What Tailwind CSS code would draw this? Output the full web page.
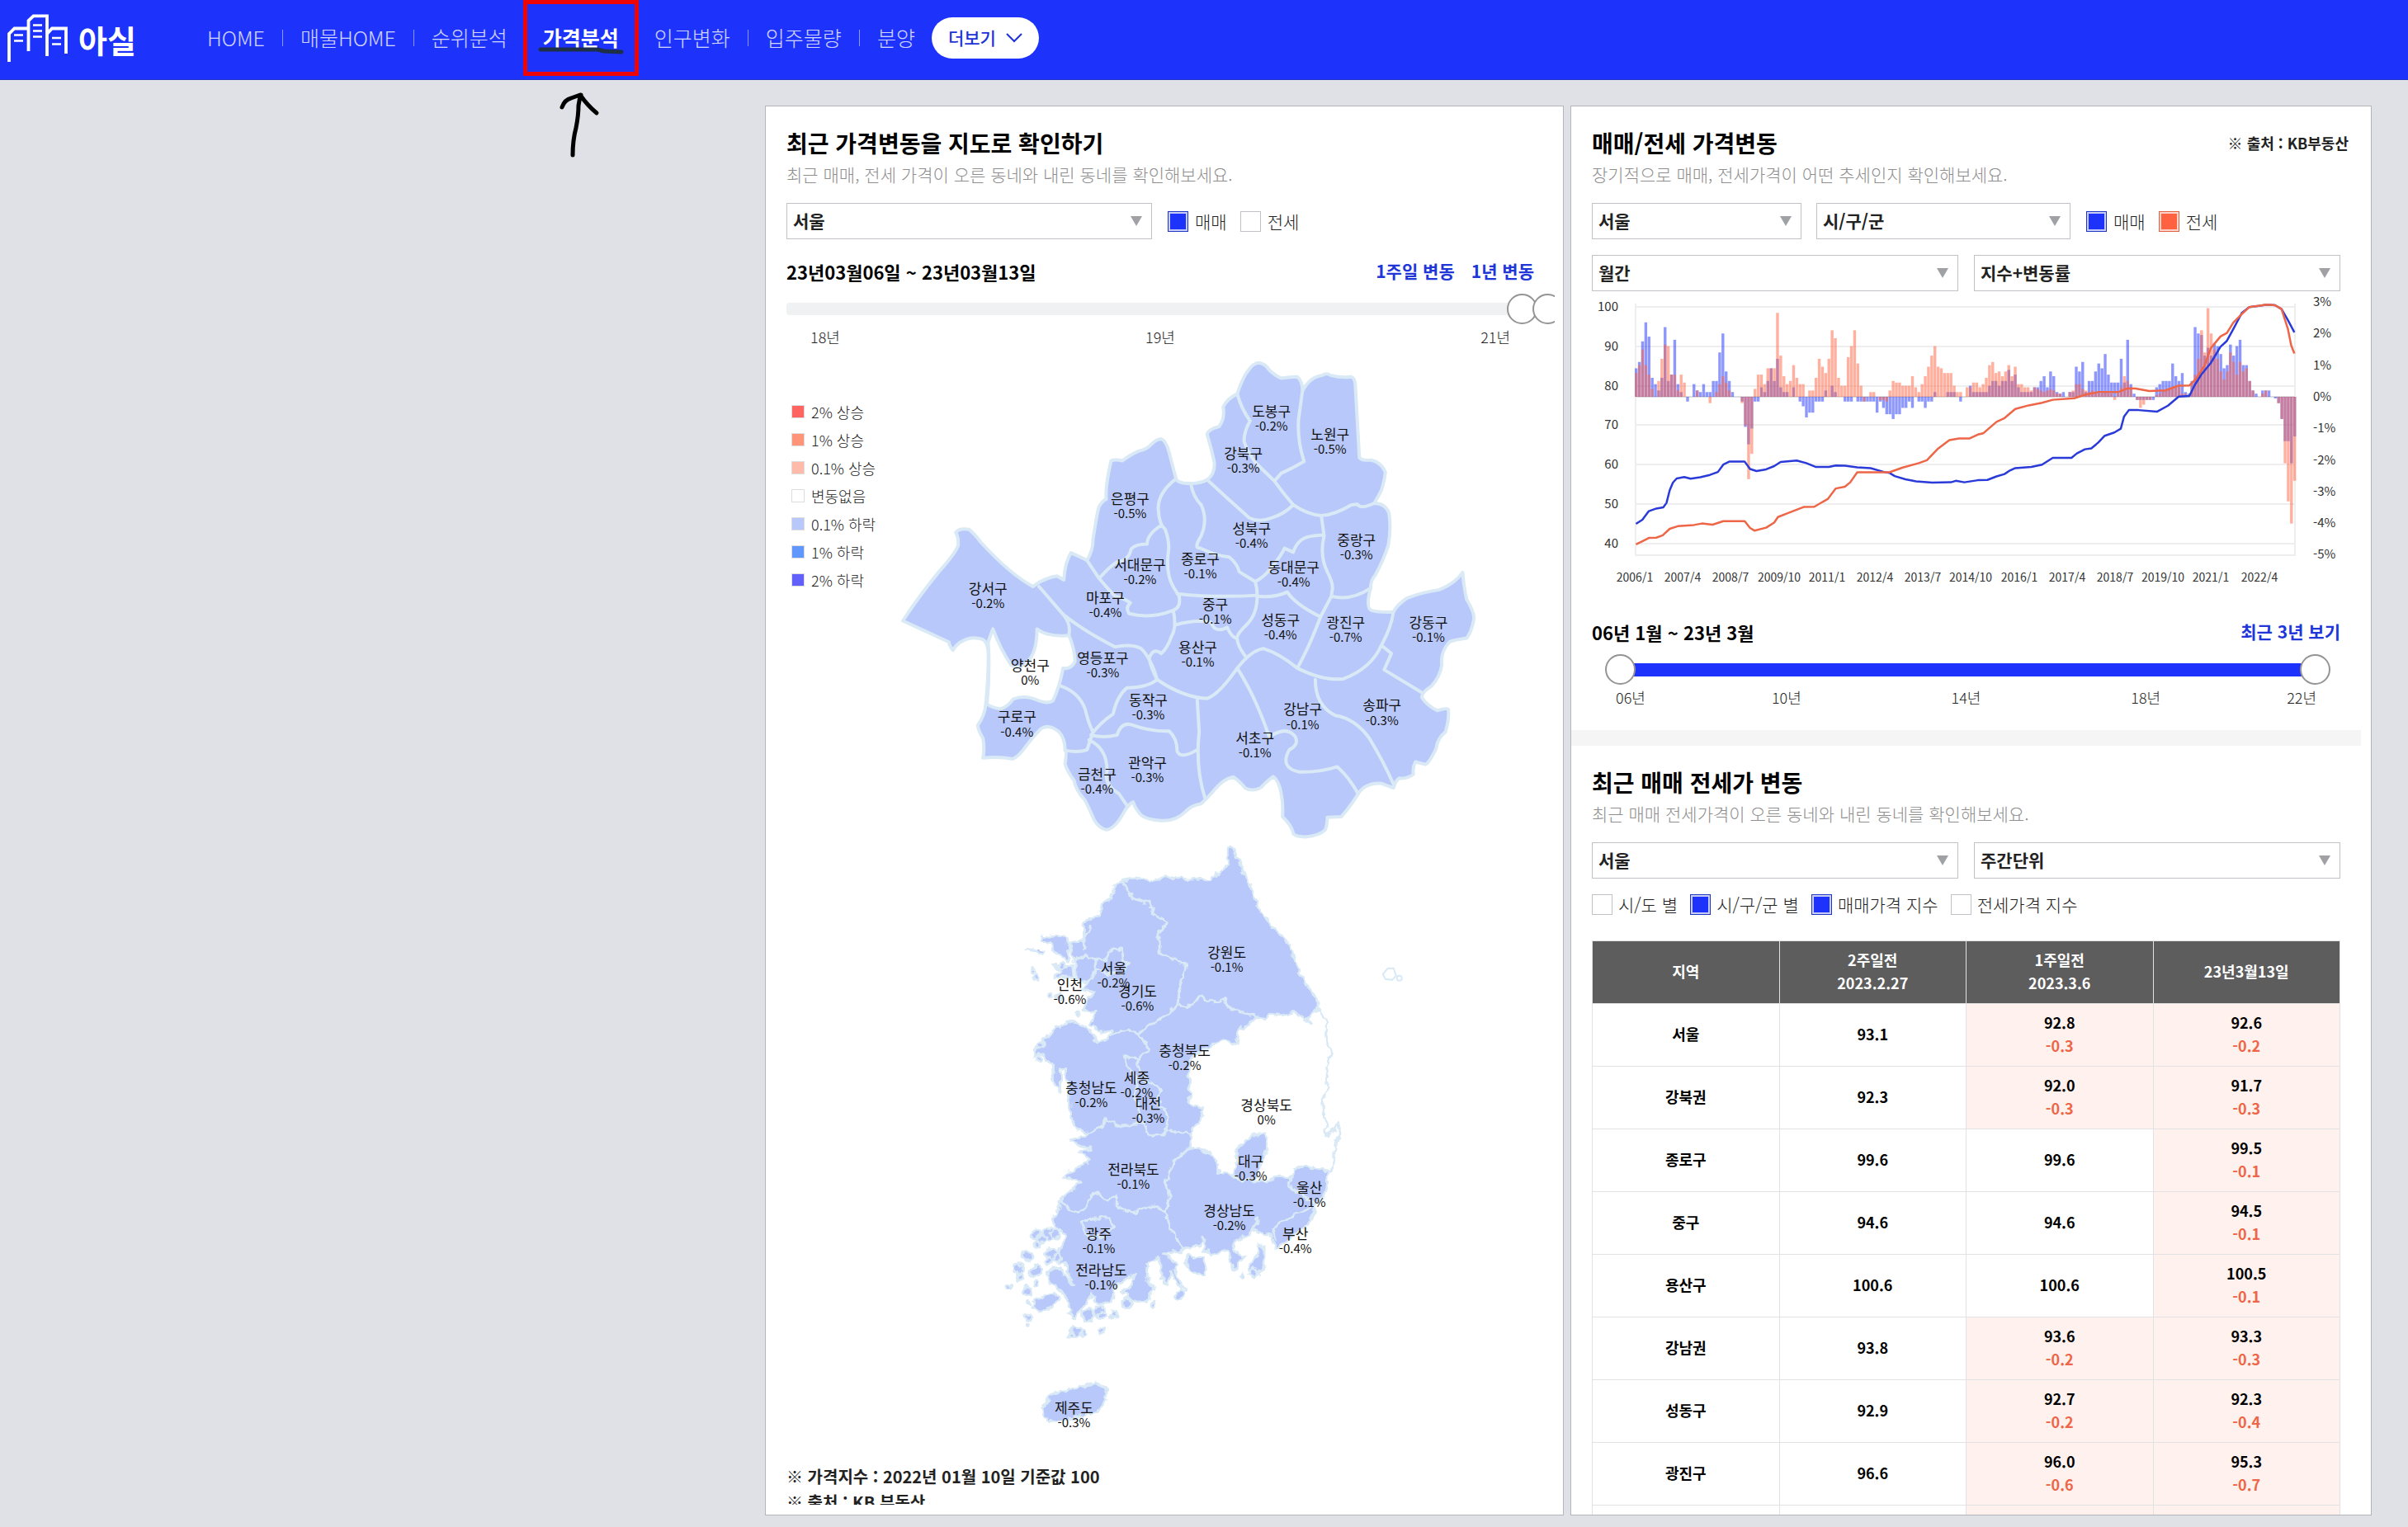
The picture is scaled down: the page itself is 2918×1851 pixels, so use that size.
<!DOCTYPE html>
<html lang="ko">
  <head>
    <meta charset="UTF-8" />
    <meta name="viewport" content="width=device-width, initial-scale=1" />
    <title>아실 - 가격분석</title>
    <script src="https://cdn.jsdelivr.net/npm/@tailwindcss/browser@4"></script>
  </head>
  <body class="bg-[#e0e1e6] text-[#222] font-['Noto_Sans_CJK_KR',sans-serif] h-screen flex flex-col overflow-hidden">

    <!-- Navbar -->
    <header class="h-[97px] shrink-0 flex items-center bg-[#1d32fa] text-white border-b border-[#2233c8]">
      <a href="#" class="w-[251px] flex items-center gap-1" aria-label="아실">
        <svg class="w-[91px] h-[97px]" viewBox="0 0 91 97" fill="none" stroke="#fff">
          <g stroke-width="3.8">
            <path d="M11 75V41L17.500 34.500H34" />
            <path d="M34.500 62V25L40.500 19.300H57V68" />
            <path d="M57 41L63 34.500H80V65" />
          </g>
          <path stroke-width="2.600" d="M17 42.500H28M17 49.500H28M40 30.500H51M40 37.500H51M40 44.500H51M63 46H74M63 53.500H74" />
        </svg>
        <span class="text-[38px] leading-10 font-bold">아실</span>
      </a>
      <nav class="h-full flex items-center pb-1 text-[25px] font-light text-white/80">
        <a href="#">HOME</a>
        <span class="w-px h-5 mx-[21px] bg-white/50"></span>
        <a href="#">매물HOME</a>
        <span class="w-px h-5 mx-[21px] bg-white/50"></span>
        <a href="#">순위분석</a>
        <span class="w-px h-5 mx-[21px]"></span>
        <div class="relative self-stretch flex items-center">
          <a href="#" class="font-bold text-white">가격분석</a>
          <svg class="absolute top-0 left-1/2 -translate-x-1/2 w-[140px] h-[200px] max-w-none pointer-events-none" viewBox="0 0 140 200" fill="none" stroke-linecap="round" stroke-linejoin="round">
            <rect x="2.500" y="2.500" width="135" height="87" stroke="#f00505" stroke-width="5" stroke-linejoin="miter" />
            <path d="M21 60H90L98 62L119 63" stroke="#1e2f48" stroke-width="5" />
            <path d="M60 188Q60 170 64 155Q67 140 67 128Q68 120 70 115M47 130Q50 121 58 119L69 115Q78 128 89 137" stroke="#000" stroke-width="5" />
          </svg>
        </div>
        <span class="w-px h-5 mx-[21px]"></span>
        <a href="#">인구변화</a>
        <span class="w-px h-5 mx-[21px] bg-white/50"></span>
        <a href="#">입주물량</a>
        <span class="w-px h-5 mx-[21px] bg-white/50"></span>
        <a href="#">분양</a>
        <button type="button" class="ml-5 h-[50px] w-[130px] rounded-full bg-white text-[#1d32d8] text-[21px] font-medium flex items-center justify-center gap-3">
          더보기
          <svg class="w-5 h-3" viewBox="0 0 20 12" fill="none" stroke="#1d32d8" stroke-width="2"><path d="M1 1L10 10L19 1" /></svg>
        </button>
      </nav>
    </header>

    <main class="flex-1 min-h-0 grid grid-cols-[968fr_971fr] gap-2 pl-[927px] pr-11 pt-[31px] pb-3.5">

      <!-- Map panel -->
      <section class="min-h-0 bg-white border border-[#b4b5ba] pt-6 pb-3 pl-[25px] pr-[10px] flex flex-col">
        <div class="flex-1 min-h-0 overflow-hidden">
          <div class="pr-[25px]">
            <h2 class="text-[28px] leading-10 font-bold text-black">최근 가격변동을 지도로 확인하기</h2>
            <p class="text-[21px] leading-9 font-light text-[#8e8e8e]">최근 매매, 전세 가격이 오른 동네와 내린 동네를 확인해보세요.</p>
            <div class="mt-[17px] flex items-center">
              <div class="relative w-[443px] mr-[19px]">
                <select aria-label="지역" class="w-full h-11 px-[7px] border border-[#bfc2c7] rounded-none bg-white text-[21px] font-bold appearance-none"><option>서울</option></select>
                <svg class="absolute right-3 top-4 w-3.5 h-3 pointer-events-none" viewBox="0 0 14 12" fill="#9fa1a5"><path d="M0 0H14L7 12Z" /></svg>
              </div>
              <label class="flex items-center gap-2 mr-4 text-[21px] leading-8 font-light">
                <input type="checkbox" checked class="appearance-none size-[25px] border border-[#bfc2c7] checked:border-[#2034c4] checked:bg-[#1d32fa] checked:shadow-[inset_0_0_0_2px_#c9cef8]" />매매
              </label>
              <label class="flex items-center gap-2 text-[21px] leading-8 font-light">
                <input type="checkbox" class="appearance-none size-[25px] border border-[#bfc2c7]" />전세
              </label>
            </div>
            <div class="mt-[19px] h-10 flex items-center justify-between">
              <strong class="text-[22px] font-bold text-black">23년03월06일 ~ 23년03월13일</strong>
              <div class="flex gap-5 text-[21px] font-bold text-[#2036d8]">
                <button type="button">1주일 변동</button>
                <button type="button">1년 변동</button>
              </div>
            </div>
          </div>
          <div class="mt-[7px] overflow-hidden">
            <div class="relative h-[37px] -mr-2.5 flex items-center">
              <div class="w-full h-[15px] rounded bg-[#f0f1f3]"></div>
              <input aria-label="시작" type="range" min="0" max="903" value="872" class="absolute inset-0 w-full appearance-none bg-transparent pointer-events-none [&::-webkit-slider-thumb]:appearance-none [&::-webkit-slider-thumb]:size-[37px] [&::-webkit-slider-thumb]:rounded-full [&::-webkit-slider-thumb]:bg-white [&::-webkit-slider-thumb]:border-2 [&::-webkit-slider-thumb]:border-solid [&::-webkit-slider-thumb]:border-[#959595] [&::-webkit-slider-thumb]:pointer-events-auto" />
              <input aria-label="끝" type="range" min="0" max="903" value="903" class="absolute inset-0 w-full appearance-none bg-transparent pointer-events-none [&::-webkit-slider-thumb]:appearance-none [&::-webkit-slider-thumb]:size-[37px] [&::-webkit-slider-thumb]:rounded-full [&::-webkit-slider-thumb]:bg-white [&::-webkit-slider-thumb]:border-2 [&::-webkit-slider-thumb]:border-solid [&::-webkit-slider-thumb]:border-[#959595] [&::-webkit-slider-thumb]:pointer-events-auto" />
            </div>
          </div>
          <div class="mr-[25px] px-[29px] flex justify-between text-[18px] leading-[30px] font-light">
            <span>18년</span><span>19년</span><span>21년</span>
          </div>

          <div class="relative mr-[25px]">
            <ul class="absolute left-1.5 top-[59px] text-[18px] leading-[34px] font-light">
              <li class="flex items-center gap-2"><i class="size-4 border border-[#ddd] bg-[#ff6560]"></i>2% 상승</li>
              <li class="flex items-center gap-2"><i class="size-4 border border-[#ddd] bg-[#ff9478]"></i>1% 상승</li>
              <li class="flex items-center gap-2"><i class="size-4 border border-[#ddd] bg-[#ffbbaa]"></i>0.1% 상승</li>
              <li class="flex items-center gap-2"><i class="size-4 border border-[#ddd] bg-white"></i>변동없음</li>
              <li class="flex items-center gap-2"><i class="size-4 border border-[#ddd] bg-[#b8c8fa]"></i>0.1% 하락</li>
              <li class="flex items-center gap-2"><i class="size-4 border border-[#ddd] bg-[#5f97fc]"></i>1% 하락</li>
              <li class="flex items-center gap-2"><i class="size-4 border border-[#ddd] bg-[#6160fb]"></i>2% 하락</li>
            </ul>
            <svg id="map" class="block w-full" viewBox="0 0 905 1350">
              <defs>
                <filter id="coast" x="-5%" y="-5%" width="110%" height="110%">
                  <feTurbulence type="fractalNoise" baseFrequency="0.11" numOctaves="2" seed="4" />
                  <feDisplacementMap in="SourceGraphic" scale="9" xChannelSelector="R" yChannelSelector="G" />
                </filter>
              </defs>

              <!-- Seoul districts -->
              <g transform="translate(107 -3) scale(.4847 .3954)" fill="#b8c8fa" stroke="#d9e9f5" stroke-width="4" stroke-linejoin="round" stroke-linecap="round">
                <path vector-effect="non-scaling-stroke" d="M958 50Q975 52 985 72Q1000 90 1015 97Q1040 93 1055 93Q1068 105 1068 135Q1085 100 1105 92L1118 88Q1128 80 1138 88Q1165 97 1190 93Q1200 98 1200 120L1205 230L1210 340Q1215 350 1240 348Q1265 355 1275 385Q1273 410 1265 440Q1255 465 1247 480Q1275 480 1284 510Q1290 560 1282 610Q1270 655 1250 700Q1238 715 1238 740Q1225 800 1240 808Q1260 815 1295 813Q1305 790 1330 770Q1370 752 1410 745Q1450 725 1468 692Q1470 730 1478 775Q1498 815 1496 835Q1490 875 1478 893Q1440 900 1435 905Q1412 935 1416 975Q1412 1010 1390 1040Q1365 1060 1366 1075Q1380 1100 1405 1115Q1430 1105 1432 1112Q1435 1140 1425 1180Q1405 1200 1402 1230Q1385 1275 1375 1280L1350 1272Q1342 1290 1345 1310Q1330 1325 1310 1322Q1300 1330 1295 1352Q1280 1345 1265 1338Q1225 1335 1207 1370Q1190 1405 1165 1440L1130 1442Q1130 1465 1125 1480Q1110 1498 1075 1502Q1045 1500 1045 1490Q1040 1465 1018 1440Q1020 1400 1015 1370Q1010 1330 995 1317Q975 1335 965 1350Q945 1365 925 1352Q910 1330 895 1318Q870 1325 850 1355Q830 1385 815 1400Q790 1405 775 1425Q750 1455 715 1452Q680 1450 665 1435Q650 1415 645 1395Q635 1400 625 1420Q600 1478 578 1480Q560 1475 548 1450Q530 1400 525 1390Q500 1355 498 1330Q480 1300 475 1278Q480 1240 475 1235Q475 1200 460 1180Q435 1155 415 1170Q395 1195 380 1220Q360 1255 345 1263Q310 1255 270 1260Q275 1230 270 1200Q258 1175 257 1160Q275 1130 277 1095Q285 1000 283 930Q280 905 270 897Q240 885 218 903Q205 910 195 930Q185 915 185 905L70 840Q110 765 160 690Q200 635 208 610Q210 585 202 570Q210 555 235 560Q250 575 265 600Q340 700 395 735Q420 710 455 703L472 715Q475 660 490 632Q505 640 530 655Q545 625 545 590Q555 510 560 490Q570 470 578 468Q575 430 590 350Q600 345 618 350Q640 330 660 320Q680 315 690 300Q705 283 715 283Q728 290 735 325L752 405Q755 415 770 418Q810 423 830 408Q850 390 848 355Q840 310 830 270Q830 255 860 245Q875 220 870 185Q880 160 905 145Q920 90 935 70Q945 52 958 50Z" />
                <path vector-effect="non-scaling-stroke" fill="#fff" d="M283 905Q290 880 295 865Q315 930 340 975Q360 995 385 960Q405 930 405 865Q430 890 485 885Q500 930 500 965Q490 990 470 985Q462 1040 445 1085Q430 1095 410 1085Q375 1065 345 1080Q335 1100 315 1110Q290 1105 280 1095Q288 1000 283 905Z" />
                <path vector-effect="non-scaling-stroke" fill="none" d="M905 145Q915 190 937 228Q922 260 922 290Q930 320 950 355Q975 385 998 412M1068 135L1058 225Q1055 290 1072 352Q1040 375 1015 388L998 412Q1020 450 1045 485Q1080 515 1115 518Q1150 515 1190 485L1205 483Q1212 500 1247 480M830 408Q880 465 935 525Q960 540 990 525Q1020 515 1045 485M790 425Q795 460 815 485Q832 530 815 580Q795 620 812 617Q850 640 885 645Q905 665 910 690Q930 705 950 720Q975 705 995 670Q1015 640 1023 618L1045 630Q1055 590 1085 582Q1105 577 1118 578M1115 518L1122 580Q1110 640 1130 690Q1143 720 1143 740L1140 765Q1190 780 1238 740M1140 765L1113 828Q1085 920 1055 985M950 720Q955 740 955 765Q1000 770 1030 752Q1050 790 1113 828M755 757Q850 770 955 762Q955 820 930 850Q905 880 905 890M752 405Q705 450 708 500Q710 545 725 560Q738 600 732 640Q728 700 745 735L760 765Q765 800 745 808Q690 835 635 818Q625 800 638 785Q620 770 600 765Q580 740 560 710L530 655M560 710Q590 670 605 660Q635 655 640 620Q650 605 680 605Q680 575 715 548M745 808Q755 860 740 890Q730 925 715 940Q695 920 685 955M750 853Q800 835 840 845Q850 880 880 860Q890 890 905 895Q905 915 925 948M410 735L470 820Q520 870 600 920Q640 910 665 925Q690 955 705 1020M470 820Q490 850 485 880M465 1040Q510 1060 525 1110Q535 1160 545 1180L530 1235Q510 1245 475 1237M705 1020Q770 1075 830 1078Q860 1065 905 985Q940 930 970 925Q1010 940 1055 985Q1120 1025 1170 1018Q1240 985 1265 915Q1290 860 1295 813M1265 915L1290 940L1272 990L1366 1060M1100 1020Q1100 1100 1150 1130Q1200 1140 1235 1200Q1270 1270 1297 1345M905 985Q950 1070 985 1195Q1030 1160 1050 1195Q1060 1220 1035 1235Q1010 1290 1060 1303Q1110 1305 1155 1287Q1185 1320 1207 1370M805 1080L810 1180Q800 1290 825 1385M705 1020Q680 1045 630 1045Q605 1070 595 1125Q560 1155 540 1190Q570 1200 605 1190Q615 1150 640 1158Q690 1180 735 1178Q755 1200 755 1240Q765 1265 805 1235M535 1205Q580 1230 580 1300Q570 1340 610 1370L632 1410M685 955Q690 985 705 1020" />
              </g>

              <!-- Provinces -->
              <g filter="url(#coast)">
                <g transform="translate(207 587) scale(.3571 .3333)" fill="#b8c8fa" stroke="#d9e9f5" stroke-width="3" stroke-linejoin="round" stroke-linecap="round">
                  <path vector-effect="non-scaling-stroke" d="M930 42L962 120L1000 210L1015 258L1060 330L1125 400L1150 480L1190 560L1222 605L1222 632L1250 680L1252 740L1268 805L1252 850L1255 920L1238 965L1240 1030L1255 1055L1238 1075L1255 1100L1290 1055L1297 1085L1280 1130L1280 1180L1265 1220L1258 1230L1250 1300L1215 1350L1200 1400L1190 1420L1150 1450L1100 1495L1080 1510L1065 1460L1035 1455L1005 1440L1020 1395L990 1455L940 1480L935 1510L975 1540L935 1590L925 1540L915 1515L860 1525L835 1510L835 1470L815 1500L770 1505L755 1520L700 1520L750 1565L735 1580L770 1655L745 1640L725 1590L710 1640L690 1610L690 1570L680 1540L645 1560L640 1610L670 1655L640 1700L600 1700L560 1660L590 1640L600 1600L570 1620L540 1640L520 1700L490 1710L465 1700L455 1670L440 1700L400 1755L375 1745L385 1730L365 1680L345 1650L310 1630L305 1590L345 1575L380 1630L395 1640L370 1590L370 1560L340 1560L345 1510L370 1460L330 1430L320 1400L340 1370L355 1320L400 1285L420 1265L365 1245L410 1210L455 1185L410 1160L455 1140L400 1130L385 1112L430 1100L445 1090L400 1065L385 1030L380 960L370 900L365 850L350 860L350 940L330 920L325 850L290 800L262 810L270 760L310 735L330 700L350 710L375 680L430 700L460 730L475 765L500 750L520 735L520 715L480 720L450 690L470 650L430 640L440 610L465 575L420 560L440 540L405 530L400 480L390 450L385 395L425 390L430 420L428 320L485 290L490 255L520 235L530 195L560 170L600 160L680 170L700 160L760 157L775 165L850 168L900 130L915 110L915 55Z" />
                  <path vector-effect="non-scaling-stroke" fill="#fff" d="M1015 668L950 720L945 765L890 750L860 770L790 815L785 870L790 950L785 980L835 1000L820 1050L795 1075L790 1135L850 1160L885 1190L885 1230L940 1240L1000 1258L1050 1265L1085 1245L1130 1250L1145 1215L1175 1205L1200 1215L1258 1225L1265 1220L1280 1180L1280 1130L1297 1085L1290 1055L1255 1100L1238 1075L1255 1055L1240 1030L1238 965L1255 920L1252 850L1268 805L1252 740L1250 680L1222 632L1185 670L1200 690L1145 650L1100 660L1060 655L1045 675Z" />
                  <path vector-effect="non-scaling-stroke" d="M945 1150L970 1125L1000 1095L1045 1095L1050 1140L1035 1190L1020 1230L1000 1260L960 1260L935 1240L950 1190Z" />
                  <path vector-effect="non-scaling-stroke" fill="none" d="M560 170L590 230L655 255L665 290L708 320L685 360L685 435L755 465L775 475L762 520L745 625L800 625L820 590L850 610L905 605L920 630L1015 665M745 625L690 670L615 725L575 710L520 735M615 725L650 785L610 820L570 805L580 850L610 890L650 900L690 930L680 985L705 1000L712 1080M610 820L620 860L650 900M610 890L600 960L630 1050M445 1090L490 1065L500 1040L550 1060L630 1050L645 1090L680 1100L720 1080L790 1090M1130 1250L1120 1275L1150 1300L1210 1340M1200 1360L1150 1380L1100 1410L1070 1440L1080 1470M355 1320L370 1365L410 1375L440 1350L460 1305L510 1330L540 1315L540 1365L600 1375L650 1350L680 1355L705 1375M795 1135L730 1190L722 1225L705 1270L722 1320L705 1375L720 1435L762 1500L755 1520M425 1440L420 1405L455 1405L470 1395L515 1395L530 1430L500 1465L440 1460ZM465 490L475 460L500 460L520 420L555 418L560 460L580 470L560 510L510 505ZM400 460L430 440L470 460L460 520L440 540M430 375L450 340" />
                  <path vector-effect="non-scaling-stroke" d="M285 370L330 375L355 370L380 400L375 460L340 440L325 420L320 400L285 390ZM235 420L265 425L285 440L290 425M325 475L390 480L395 525L330 520L350 500ZM255 1715L265 1690L330 1665L342 1690L320 1720L280 1740ZM990 1560L1020 1530L1015 1490L1040 1500L1040 1580L1010 1600L985 1580ZM770 1560L780 1530L810 1540L840 1540L835 1605L790 1590ZM285 2090L320 2035L375 2020L465 1997L505 2015L505 2060L470 2100L390 2120L310 2138Z" />
                </g>
                <g id="islands" fill="#b8c8fa" stroke="#d9e9f5" stroke-width="3"></g>
              </g>
              <g fill="#fff" stroke="#d9e9f5" stroke-width="2">
                <path d="M722 757L728 750L735 750L738 759L733 764L725 763Z" />
                <circle cx="742" cy="762" r="3" />
              </g>
              <g id="labels" class="text-[#111]" fill="currentColor" text-anchor="middle"></g>
            </svg>
          </div>

          <p class="text-[20px] leading-[31px] font-bold">※ 가격지수 : 2022년 01월 10일 기준값 100</p>
          <p class="text-[20px] leading-[31px] font-bold">※ 출처 : KB 부동산</p>
        </div>
      </section>

      <!-- Price panel -->
      <section class="min-h-0 overflow-hidden bg-white border border-[#b4b5ba] pt-6 pl-[25px] pr-[37px]">
        <div class="flex items-center justify-between -mr-2.5">
          <h2 class="text-[28px] leading-10 font-bold text-black">매매/전세 가격변동</h2>
          <strong class="text-[18px] font-bold">※ 출처 : KB부동산</strong>
        </div>
        <p class="text-[21px] leading-9 font-light text-[#8e8e8e]">장기적으로 매매, 전세가격이 어떤 추세인지 확인해보세요.</p>
        <div class="mt-[17px] flex items-center">
          <div class="relative w-[254px] mr-[18px]">
            <select aria-label="시도" class="w-full h-11 px-[7px] border border-[#bfc2c7] rounded-none bg-white text-[21px] font-bold appearance-none"><option>서울</option></select>
            <svg class="absolute right-3 top-4 w-3.5 h-3 pointer-events-none" viewBox="0 0 14 12" fill="#9fa1a5"><path d="M0 0H14L7 12Z" /></svg>
          </div>
          <div class="relative w-[308px] mr-[19px]">
            <select aria-label="시군구" class="w-full h-11 px-[7px] border border-[#bfc2c7] rounded-none bg-white text-[21px] font-bold appearance-none"><option>시/구/군</option></select>
            <svg class="absolute right-3 top-4 w-3.5 h-3 pointer-events-none" viewBox="0 0 14 12" fill="#9fa1a5"><path d="M0 0H14L7 12Z" /></svg>
          </div>
          <label class="flex items-center gap-2 mr-4 text-[21px] leading-8 font-light">
            <input type="checkbox" checked class="appearance-none size-[25px] border border-[#2034c4] checked:bg-[#1d32fa] checked:shadow-[inset_0_0_0_2px_#c9cef8]" />매매
          </label>
          <label class="flex items-center gap-2 text-[21px] leading-8 font-light">
            <input type="checkbox" checked class="appearance-none size-[25px] border border-[#e0603f] checked:bg-[#ff6240] checked:shadow-[inset_0_0_0_2px_#ffd5cb]" />전세
          </label>
        </div>
        <div class="mt-[19px] grid grid-cols-2 gap-[19px]">
          <div class="relative">
            <select aria-label="기간" class="w-full h-11 px-[7px] border border-[#bfc2c7] rounded-none bg-white text-[21px] font-bold appearance-none"><option>월간</option></select>
            <svg class="absolute right-3 top-4 w-3.5 h-3 pointer-events-none" viewBox="0 0 14 12" fill="#9fa1a5"><path d="M0 0H14L7 12Z" /></svg>
          </div>
          <div class="relative">
            <select aria-label="지표" class="w-full h-11 px-[7px] border border-[#bfc2c7] rounded-none bg-white text-[21px] font-bold appearance-none"><option>지수+변동률</option></select>
            <svg class="absolute right-3 top-4 w-3.5 h-3 pointer-events-none" viewBox="0 0 14 12" fill="#9fa1a5"><path d="M0 0H14L7 12Z" /></svg>
          </div>
        </div>

        <svg id="chart" class="block w-full" viewBox="0 0 907 365">
          <g id="grid" fill="none" stroke="#eeeeee" stroke-width="2"></g>
          <g id="bars"></g>
          <g id="lines" transform="translate(-29 -13) scale(.6492 .3571)" fill="none" stroke-width="2.5" stroke-linejoin="round"></g>
          <g id="axis" class="text-[15px]" fill="#333"></g>
        </svg>

        <div class="mt-7 h-10 flex items-center justify-between">
          <strong class="text-[22px] font-bold text-black">06년 1월 ~ 23년 3월</strong>
          <button type="button" class="text-[21px] font-bold text-[#2036d8]">최근 3년 보기</button>
        </div>
        <div class="mt-[7px] ml-4 mr-3 relative h-[37px] flex items-center px-4">
          <div class="w-full h-4 bg-[#1d32fa]"></div>
          <input aria-label="시작 연도" type="range" min="0" max="100" value="0" class="absolute inset-0 w-full appearance-none bg-transparent pointer-events-none [&::-webkit-slider-thumb]:appearance-none [&::-webkit-slider-thumb]:size-[37px] [&::-webkit-slider-thumb]:rounded-full [&::-webkit-slider-thumb]:bg-white [&::-webkit-slider-thumb]:border-2 [&::-webkit-slider-thumb]:border-solid [&::-webkit-slider-thumb]:border-[#959595] [&::-webkit-slider-thumb]:pointer-events-auto" />
          <input aria-label="끝 연도" type="range" min="0" max="100" value="100" class="absolute inset-0 w-full appearance-none bg-transparent pointer-events-none [&::-webkit-slider-thumb]:appearance-none [&::-webkit-slider-thumb]:size-[37px] [&::-webkit-slider-thumb]:rounded-full [&::-webkit-slider-thumb]:bg-white [&::-webkit-slider-thumb]:border-2 [&::-webkit-slider-thumb]:border-solid [&::-webkit-slider-thumb]:border-[#959595] [&::-webkit-slider-thumb]:pointer-events-auto" />
        </div>
        <div class="px-[29px] flex text-[18px] leading-[30px] font-light text-center">
          <span class="w-[98px] text-left">06년</span>
          <span class="flex-1">10년</span>
          <span class="flex-1">14년</span>
          <span class="flex-1">18년</span>
          <span class="w-[98px] text-right">22년</span>
        </div>

        <div class="mt-[25px] mb-6 h-[19px] -mx-[25px] bg-[#f5f5f6]"></div>

        <h2 class="text-[28px] leading-10 font-bold text-black">최근 매매 전세가 변동</h2>
        <p class="text-[21px] leading-9 font-light text-[#8e8e8e]">최근 매매 전세가격이 오른 동네와 내린 동네를 확인해보세요.</p>
        <div class="mt-[17px] grid grid-cols-2 gap-[19px]">
          <div class="relative">
            <select aria-label="지역" class="w-full h-11 px-[7px] border border-[#bfc2c7] rounded-none bg-white text-[21px] font-bold appearance-none"><option>서울</option></select>
            <svg class="absolute right-3 top-4 w-3.5 h-3 pointer-events-none" viewBox="0 0 14 12" fill="#9fa1a5"><path d="M0 0H14L7 12Z" /></svg>
          </div>
          <div class="relative">
            <select aria-label="단위" class="w-full h-11 px-[7px] border border-[#bfc2c7] rounded-none bg-white text-[21px] font-bold appearance-none"><option>주간단위</option></select>
            <svg class="absolute right-3 top-4 w-3.5 h-3 pointer-events-none" viewBox="0 0 14 12" fill="#9fa1a5"><path d="M0 0H14L7 12Z" /></svg>
          </div>
        </div>
        <div class="mt-[15px] flex items-center gap-[15px] text-[21px] leading-8 font-light">
          <label class="flex items-center gap-[7px]"><input type="checkbox" class="appearance-none size-[25px] border border-[#bfc2c7]" />시/도 별</label>
          <label class="flex items-center gap-[7px]"><input type="checkbox" checked class="appearance-none size-[25px] border border-[#2034c4] checked:bg-[#1d32fa] checked:shadow-[inset_0_0_0_2px_#c9cef8]" />시/구/군 별</label>
          <label class="flex items-center gap-[7px]"><input type="checkbox" checked class="appearance-none size-[25px] border border-[#2034c4] checked:bg-[#1d32fa] checked:shadow-[inset_0_0_0_2px_#c9cef8]" />매매가격 지수</label>
          <label class="flex items-center gap-[7px]"><input type="checkbox" class="appearance-none size-[25px] border border-[#bfc2c7]" />전세가격 지수</label>
        </div>

        <table class="mt-7 w-full table-fixed border-collapse text-center text-[18px] leading-7 font-bold text-black">
          <thead>
            <tr class="h-[76px] bg-[#5d5d5d] text-white">
              <th class="border border-[#e2e2e2] pb-[3px] font-bold">지역</th>
              <th class="border border-[#e2e2e2] pb-[3px] font-bold">2주일전<br />2023.2.27</th>
              <th class="border border-[#e2e2e2] pb-[3px] font-bold">1주일전<br />2023.3.6</th>
              <th class="border border-[#e2e2e2] pb-[3px] font-bold">23년3월13일</th>
            </tr>
          </thead>
          <tbody id="rows"></tbody>
        </table>
      </section>
    </main>

    <script>
      const NS = 'http://www.w3.org/2000/svg';
      function add(parent, tag, attrs, text) {
        const el = document.createElementNS(NS, tag);
        for (const k in attrs) el.setAttribute(k, attrs[k]);
        if (text !== undefined) el.textContent = text;
        parent.appendChild(el);
        return el;
      }
      const $ = id => document.getElementById(id);

      // Map labels: name, rate, x, y
      const seoul = [
        ['도봉구', '-0.2%', 990, 200], ['노원구', '-0.5%', 1136, 271], ['강북구', '-0.3%', 920, 329],
        ['은평구', '-0.5%', 638, 468], ['성북구', '-0.4%', 940, 559], ['중랑구', '-0.3%', 1202, 594],
        ['종로구', '-0.1%', 812, 652], ['서대문구', '-0.2%', 662, 669], ['동대문구', '-0.4%', 1046, 677],
        ['강서구', '-0.2%', 282, 744], ['마포구', '-0.4%', 575, 771], ['중구', '-0.1%', 850, 791],
        ['성동구', '-0.4%', 1012, 839], ['광진구', '-0.7%', 1176, 846], ['강동구', '-0.1%', 1382, 846],
        ['용산구', '-0.1%', 806, 924], ['영등포구', '-0.3%', 570, 957], ['양천구', '0%', 388, 980],
        ['구로구', '-0.4%', 355, 1135], ['동작구', '-0.3%', 683, 1086], ['강남구', '-0.1%', 1068, 1114],
        ['송파구', '-0.3%', 1266, 1100], ['서초구', '-0.1%', 949, 1198], ['관악구', '-0.3%', 681, 1274],
        ['금천구', '-0.4%', 555, 1311],
      ];
      const korea = [
        ['강원도', '-0.1%', 914, 431], ['서울', '-0.2%', 528, 490], ['경기도', '-0.6%', 610, 572],
        ['인천', '-0.6%', 382, 550], ['충청북도', '-0.2%', 769, 789], ['세종', '-0.2%', 609, 887],
        ['충청남도', '-0.2%', 455, 924], ['대전', '-0.3%', 648, 981], ['경상북도', '0%', 1048, 986],
        ['대구', '-0.3%', 994, 1190], ['전라북도', '-0.1%', 596, 1222], ['울산', '-0.1%', 1192, 1287],
        ['경상남도', '-0.2%', 922, 1370], ['광주', '-0.1%', 478, 1455], ['부산', '-0.4%', 1144, 1455],
        ['전라남도', '-0.1%', 488, 1588], ['제주도', '-0.3%', 396, 2088],
      ];
      function drawLabels(list, ox, oy, sx, sy) {
        list.forEach(([name, rate, x, y]) => {
          const px = Math.round(ox + x * sx), py = Math.round(oy + y * sy);
          add($('labels'), 'text', { x: px, y: py + 6, 'font-size': 17 }, name);
          add($('labels'), 'text', { x: px, y: py + 23, 'font-size': 15 }, rate);
        });
      }
      drawLabels(seoul, 107, -3, 0.4847, 0.3954);
      drawLabels(korea, 207, 587, 0.3571, 0.3333);

      [[175,1645,3],[235,1660,5],[205,1580,6],[210,1610,4],[265,1635,3],[240,1705,2],[240,1755,4],[240,1785,2],[400,1810,6],[425,1815,3],[388,1822,3],
       [490,1805,3],[440,1750,7],[480,1735,6],[490,1750,4],[535,1745,4],[520,1755,2],[575,1705,6],[665,1710,3],[755,1675,5],[265,1590,7],[240,1535,6],[265,1455,6],
       [310,1455,7],[285,1470,5],[330,1455,5],[320,1530,7],[310,1550,4],[340,1540,4],[270,1495,4],[1005,1595,5],[970,1605,2],[255,500,3],[268,525,3],[315,590,3],[345,590,3],
       [410,655,2],[280,765,4],[278,820,3],[355,480,4]].forEach(([x, y, r]) =>
        add($('islands'), 'circle', { cx: 207 + x * 0.3571, cy: 587 + y * 0.3333, r }));

      // Monthly change, in 0.1%
      const sale = [9,11,17.5,23.5,19,6,4,2,6,22,5,7,18,4,1.5,0,-1.5,0,4,2,1.5,4,1.5,1.5,5,5,14,20,8,5,1.5,0,0,-1.5,-9.5,-15,-10,-1.5,-1.5,3,1.5,5,9,5,12,3,1.5,1.5,0,3,0,-1.5,-3,-6.5,-5,-5,-1.5,-1.5,-1.5,2,0,3.5,1.5,0,0,-1.5,-1.5,-1.5,0,-1.5,-1.5,-1.5,-1.5,-1.5,-1.5,-5,-1.5,-3.5,-5.5,-5.5,-7,-5.5,-5.5,-3.5,-3.5,-1.5,-3.5,0,-1.5,-1.5,-3.5,-1.5,-1.5,1.5,0,0,0,1.5,1.5,1.5,0,-1.5,0,0,3.5,1.5,1.5,1.5,1.5,1.5,3.5,5,5,3.5,5,5,8.5,5,7,3,1.5,1.5,1.5,1.5,3,3,5,6.5,3,8,6.5,1.5,1,1.5,0,1.5,1.5,9.5,8,11,1.5,5,5,8,10.5,9,13.5,7,4.5,4.5,4.5,12,4.5,18,4,1,-1,-1,-1,-1,-1,-1,3,4,5,5,5,10.5,6.5,5,7.5,1.5,1,5,22,20,19.5,13,15.5,13,17,16,13.5,9,10,16.5,13,16,18,10,10,5,2,1,0,2,2,2,0,-.5,-2,-7,-14,-14,-21,-12.5];
      const lease = [7.5,10,15,10,7,2.5,0,5,12,16.5,16,7,7,2,7,4.5,0,0,0,2,0,0,0,-2,0,1.5,4,6.5,4.5,2,0,0,0,-2,-9,-26,-18,2.5,7,7,4,9,9,9,26.5,13,6.5,4,5,10,6,4,4,0,2,2,6,12,9.5,7.5,12,21,18.5,6,3.5,3.5,12.5,16,21,10.5,3.5,-1.5,0,1.5,1.5,0,-1,-1,-1.5,2,5,4.5,4.5,3.5,3.5,3.5,6.5,3,1.5,4,6.5,9.5,13,16,9.5,9,7.5,7.5,7.5,3.5,1.5,1.5,0,3,3,4.5,4.5,3,4,6,10,11,7.5,8,6.5,8,10,6.5,9.5,4,4,3,3,2,3,2.5,2,1.5,2,2.5,2,1,1,0,0,1.5,2,4,4,2.5,2,1.5,2,1.5,1,1,1.5,1,1,-1,1,3,6.5,5,3,0,-1,-3.5,-2.5,-1,-1,0,.5,1,2,2,2.5,3,3,3,1,1,0,4,7,12,21,14,28,20,15,12,8,5.5,8,14,11,7,11,8,9,5,2,0,0,1,2,0,0,0,-2,-7,-21,-33,-40,-26.5];
      function drawBars(values, color) {
        const step = 798 / (values.length - 1);
        values.forEach((v, i) => {
          const h = Math.abs(v) * 3.84;
          add($('bars'), 'rect', { x: 52 + i * step, y: v > 0 ? 128 - h : 128, width: 3.4, height: h, fill: color });
        });
      }
      for (let i = 0; i < 7; i++) {
        const y = 19 + Math.round(i * 47.8);
        add($('grid'), 'path', { d: `M53 ${y}H852` });
        add($('axis'), 'text', { x: 32, y: y + 5, 'text-anchor': 'end' }, 100 - i * 10);
      }
      add($('grid'), 'path', { d: 'M53 15V320H852V15' });
      for (let i = 0; i < 9; i++) {
        add($('axis'), 'text', { x: 874, y: 18 + Math.round(i * 38.3) }, (3 - i) + '%');
      }
      ['2006/1', '2007/4', '2008/7', '2009/10', '2011/1', '2012/4', '2013/7', '2014/10', '2016/1', '2017/4', '2018/7', '2019/10', '2021/1', '2022/4'].forEach((t, i) =>
        add($('axis'), 'text', { x: 52 + Math.round(i * 58.2), y: 352, 'text-anchor': 'middle', 'font-size': 14 }, t));
      drawBars(sale, 'rgba(29,50,250,.5)');
      drawBars(lease, 'rgba(255,98,64,.5)');
      add($('grid'), 'path', { d: 'M53 128H852', stroke: '#ddd' });

      // Index lines
      const saleLine = '127,826 139,812 151,783 165,774 178,770 184,755 190,712 196,686 203,672 217,667 229,673 247,668 265,660 280,650 290,625 301,615 330,615 340,640 352,647 370,641 385,630 397,616 427,611 445,620 463,633 487,633 500,628 517,629 540,634 565,637 590,650 600,653 610,664 630,675 650,682 680,686 715,685 724,680 740,685 765,678 783,677 800,665 815,657 825,645 835,637 865,633 885,625 905,602 940,602 950,587 965,573 977,570 990,550 1002,527 1020,516 1032,503 1038,462 1047,440 1065,440 1100,445 1120,425 1140,394 1160,392 1170,355 1182,320 1200,280 1218,225 1230,205 1242,165 1258,110 1272,90 1290,86 1305,82 1320,84 1332,97 1344,135 1356,176';
      const leaseLine = '127,896 139,885 151,874 165,873 177,865 190,843 205,834 235,830 250,825 270,829 290,817 330,817 340,840 348,849 370,839 385,822 392,803 410,790 440,769 460,768 475,752 485,742 500,706 517,700 527,685 540,651 600,651 625,635 655,620 670,610 690,572 712,542 730,536 750,536 765,523 775,519 800,480 815,467 835,436 860,424 885,415 905,405 945,400 965,388 990,379 1027,379 1045,366 1060,367 1085,375 1115,373 1140,357 1160,356 1172,335 1188,290 1200,230 1218,190 1230,178 1242,143 1256,117 1272,90 1305,82 1320,84 1332,97 1344,165 1350,220 1356,248';
      add($('lines'), 'polyline', { points: saleLine, stroke: '#2a3ad8', 'vector-effect': 'non-scaling-stroke' });
      add($('lines'), 'polyline', { points: leaseLine, stroke: '#ee6647', 'vector-effect': 'non-scaling-stroke' });

      // Table rows: area, then value and change per week
      const data = [
        ['서울', ['93.1'], ['92.8', '-0.3'], ['92.6', '-0.2']],
        ['강북권', ['92.3'], ['92.0', '-0.3'], ['91.7', '-0.3']],
        ['종로구', ['99.6'], ['99.6'], ['99.5', '-0.1']],
        ['중구', ['94.6'], ['94.6'], ['94.5', '-0.1']],
        ['용산구', ['100.6'], ['100.6'], ['100.5', '-0.1']],
        ['강남권', ['93.8'], ['93.6', '-0.2'], ['93.3', '-0.3']],
        ['성동구', ['92.9'], ['92.7', '-0.2'], ['92.3', '-0.4']],
        ['광진구', ['96.6'], ['96.0', '-0.6'], ['95.3', '-0.7']],
        ['', [''], ['', ' '], ['', ' ']],
      ];
      $('rows').innerHTML = data.map(([area, ...cells]) => `
        <tr class="h-[76px]">
          <td class="border border-[#e2e2e2] pb-[3px]">${area}</td>
          ${cells.map(([v, d]) => d
            ? `<td class="border border-[#e2e2e2] pb-[3px] bg-[#fff2ee]">${v}<br><span class="text-[#ee6647]">${d}</span></td>`
            : `<td class="border border-[#e2e2e2] pb-[3px]">${v}</td>`).join('')}
        </tr>`).join('');
    </script>

  </body>
</html>
